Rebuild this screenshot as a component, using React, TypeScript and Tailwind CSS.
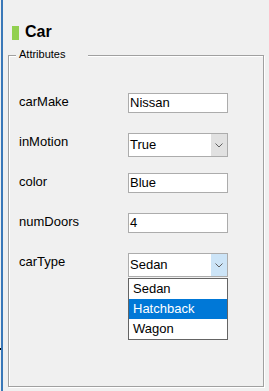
import React from "react";

function Chevron() {
  return (
    <svg width="8" height="5" viewBox="0 0 8 5" className="block">
      <polyline points="0.5,0.5 4,4 7.5,0.5" fill="none" stroke="#606060" strokeWidth="1" />
    </svg>
  );
}

function TextBox({ value }: { value: string }) {
  return (
    <div className="h-[20px] w-[100px] border border-[#acacac] bg-white pl-[1px] text-[13px] leading-[18px] text-black">
      {value}
    </div>
  );
}

function Combo({ value, open, children }: { value: string; open?: boolean; children?: React.ReactNode }) {
  return (
    <div className="relative flex h-[24px] w-[100px] border border-[#acacac] bg-white">
      <div className="flex-1 pl-[1px] text-[13px] leading-[22px] text-black">{value}</div>
      <div
        className={
          open
            ? "flex h-full w-[16px] items-center justify-center bg-[#cce4f7]"
            : "flex h-full w-[16px] items-center justify-center bg-[#e1e1e1]"
        }
      >
        <Chevron />
      </div>
      {children}
    </div>
  );
}

function Row({ label, children }: { label: string; children: React.ReactNode }) {
  return (
    <div className="flex h-[40px] items-start">
      <div className="w-[109px] pt-[1px] text-[13px] leading-[15px] text-black">{label}</div>
      {children}
    </div>
  );
}

export default function App() {
  return (
    <div className="relative h-[391px] w-[269px] overflow-hidden bg-[#f0f0f0] pl-[1px] font-['Liberation_Sans',Arial,sans-serif] text-black">
      <div className="absolute left-0 top-[348px] h-[2px] w-[1px] bg-black" />
      <div className="h-full border-l-2 border-[#3a78b8] pt-[24px]">
        <div className="flex h-[16px] items-start pl-[9px]">
          <div className="mt-[2px] h-[14px] w-[7px] bg-[#92d050]" />
          <span className="ml-[6px] text-[16px] font-bold leading-[16px]">Car</span>
        </div>
        <div className="relative ml-[5px] mt-[15px] h-[332px] w-[256px] border border-[#a0a0a0] pl-[10px] pt-[37px] shadow-[inset_1px_1px_0_#ffffff,1px_1px_0_#ffffff]">
          <div className="absolute left-[7px] top-[-7px] w-[72px] bg-[#f0f0f0] pl-[3px] text-[11px] leading-[11px]">
            Attributes
          </div>
          <Row label="carMake">
            <TextBox value="Nissan" />
          </Row>
          <Row label="inMotion">
            <Combo value="True" />
          </Row>
          <Row label="color">
            <TextBox value="Blue" />
          </Row>
          <Row label="numDoors">
            <TextBox value="4" />
          </Row>
          <Row label="carType">
            <Combo value="Sedan" open>
              <div className="absolute left-[-1px] top-[24px] z-10 w-[100px] border border-[#646464] bg-white text-[13px] leading-[20px]">
                <div className="h-[20px] pl-[4px] text-black">Sedan</div>
                <div className="h-[20px] bg-[#0078d7] pl-[4px] text-white">Hatchback</div>
                <div className="h-[20px] pl-[4px] text-black">Wagon</div>
              </div>
            </Combo>
          </Row>
        </div>
      </div>
    </div>
  );
}
